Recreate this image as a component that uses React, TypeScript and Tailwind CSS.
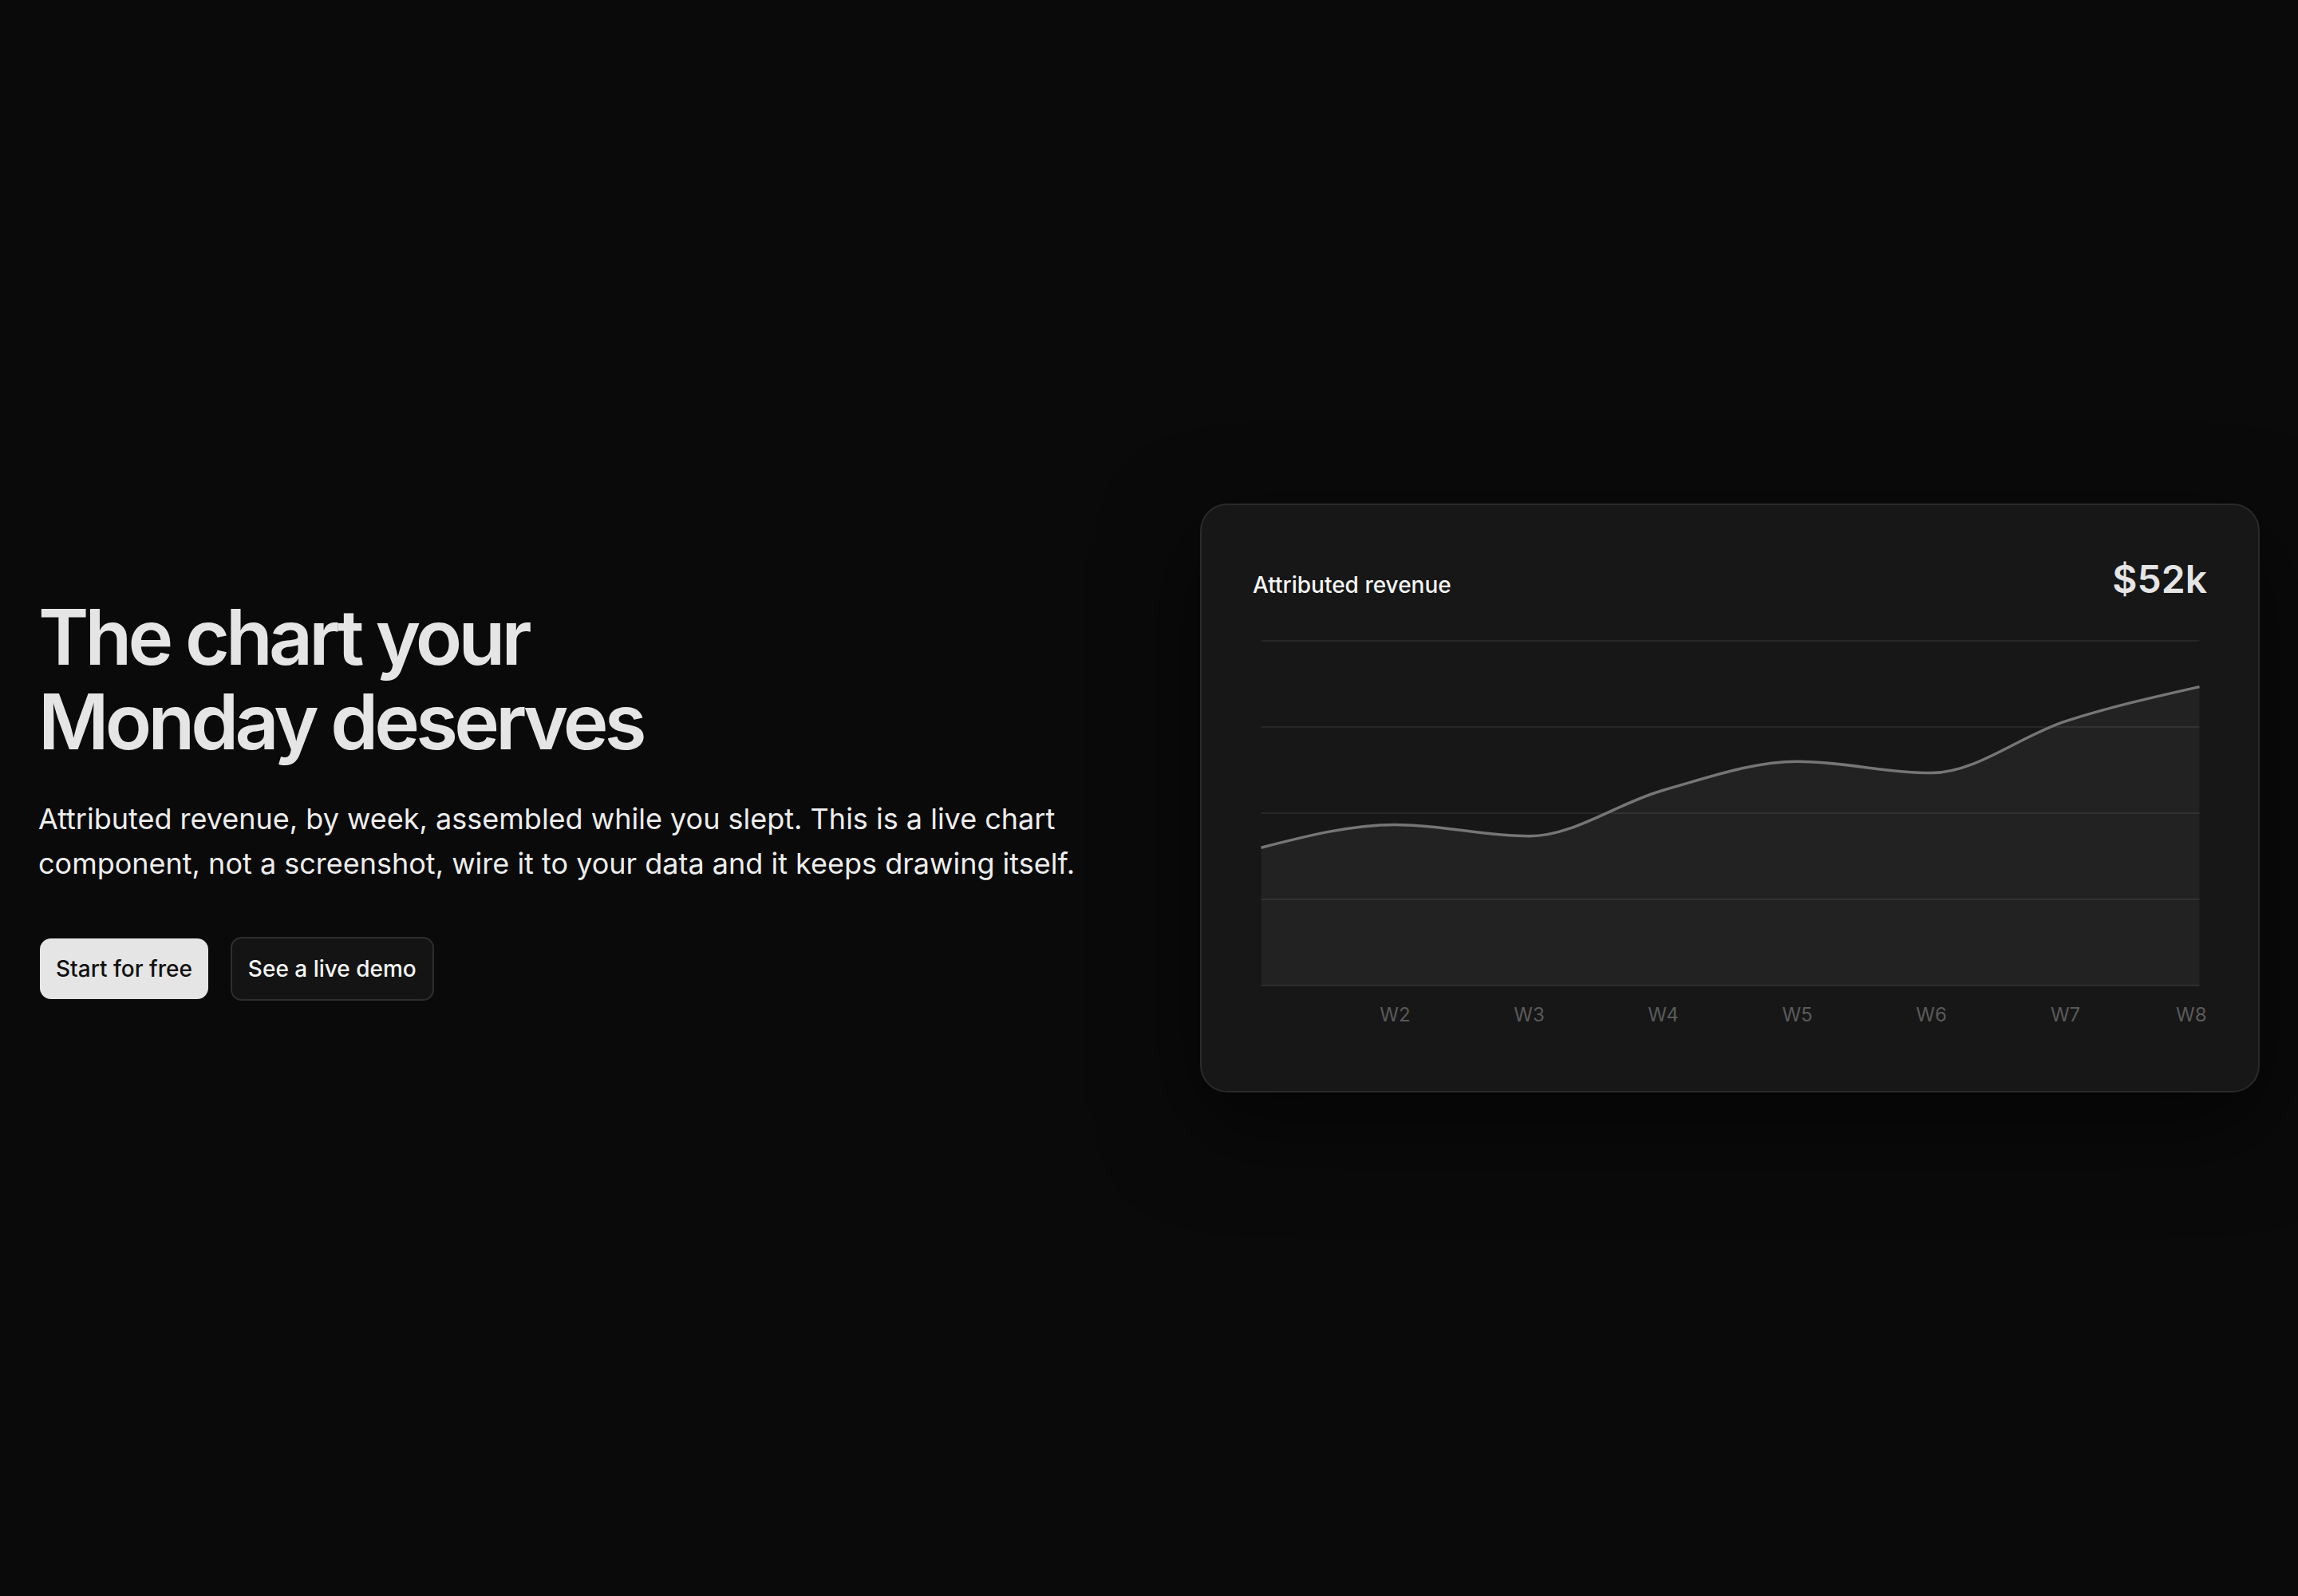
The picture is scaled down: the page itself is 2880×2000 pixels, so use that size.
import React from 'react';

const weeks = [
  { label: 'W1', value: 24 },
  { label: 'W2', value: 28 },
  { label: 'W3', value: 26 },
  { label: 'W4', value: 34 },
  { label: 'W5', value: 39 },
  { label: 'W6', value: 37 },
  { label: 'W7', value: 46 },
  { label: 'W8', value: 52 }
];

const W = 1195;
const H = 512;
const plot = { left: 10, right: 1186, top: 12, bottom: 444 };
const maxValue = 60;

type Pt = [number, number];

// monotone-x curve, same maths as d3's curveMonotoneX
const monotonePath = (pts: Pt[]) => {
  const n = pts.length;
  const sign = (v: number) => (v < 0 ? -1 : 1);
  const tangents: number[] = new Array(n).fill(0);
  for (let i = 1; i < n - 1; i++) {
    const [x0, y0] = pts[i - 1];
    const [x1, y1] = pts[i];
    const [x2, y2] = pts[i + 1];
    const h0 = x1 - x0;
    const h1 = x2 - x1;
    const s0 = (y1 - y0) / h0;
    const s1 = (y2 - y1) / h1;
    const p = (s0 * h1 + s1 * h0) / (h0 + h1);
    tangents[i] = (sign(s0) + sign(s1)) * Math.min(Math.abs(s0), Math.abs(s1), 0.5 * Math.abs(p)) || 0;
  }
  const ends = (a: Pt, b: Pt, t: number) => {
    const h = b[0] - a[0];
    return h ? (3 * (b[1] - a[1]) / h - t) / 2 : t;
  };
  tangents[0] = ends(pts[0], pts[1], tangents[1]);
  tangents[n - 1] = ends(pts[n - 2], pts[n - 1], tangents[n - 2]);

  let d = `M${pts[0][0]},${pts[0][1]}`;
  for (let i = 0; i < n - 1; i++) {
    const [x0, y0] = pts[i];
    const [x1, y1] = pts[i + 1];
    const dx = (x1 - x0) / 3;
    d += ` C${x0 + dx},${y0 + dx * tangents[i]} ${x1 - dx},${y1 - dx * tangents[i + 1]} ${x1},${y1}`;
  }
  return d;
};

const RevenueChart = () => {
  const step = (plot.right - plot.left) / (weeks.length - 1);
  const pts: Pt[] = weeks.map((week, i) => [
    plot.left + i * step,
    plot.bottom - (week.value / maxValue) * (plot.bottom - plot.top)
  ]);
  const line = monotonePath(pts);
  const area = `${line} L${plot.right},${plot.bottom} L${plot.left},${plot.bottom} Z`;
  const gridRows = [0, 1, 2, 3, 4].map((i) => plot.top + i * ((plot.bottom - plot.top) / 4));

  return (
    <svg viewBox={`0 0 ${W} ${H}`} className="mt-9 block h-[512px] w-full">
      {gridRows.map((y) => (
        <line key={y} x1={plot.left} x2={plot.right} y1={y} y2={y} stroke="#272727" strokeWidth={2} />
      ))}
      <path d={area} fill="#ffffff" fillOpacity={0.05} />
      <path d={line} fill="none" stroke="#767676" strokeWidth={3.5} />
      {weeks.slice(1).map((week, i) => {
        const last = i === weeks.length - 2;
        return (
          <text
            key={week.label}
            x={last ? W : pts[i + 1][0]}
            y={489}
            textAnchor={last ? 'end' : 'middle'}
            fill="#5a5a5a"
            fontSize={24}
            fontFamily="Inter, sans-serif"
          >
            {week.label}
          </text>
        );
      })}
    </svg>
  );
};

const App = () => {
  return (
    <div className="flex min-h-screen items-center bg-[#0a0a0a] px-12 font-['Inter',sans-serif]">
      <div className="grid w-full grid-cols-2 items-center gap-32">
        <div>
          <h1 className="text-[96px] font-semibold leading-[1.1] tracking-tighter text-[#e5e5e5]">
            The chart your
            <br />
            Monday deserves
          </h1>
          <p className="mt-10 text-[36px] leading-[56px] text-[#ededed]">
            Attributed revenue, by week, assembled while you slept. This is a live chart component, not a screenshot,
            wire it to your data and it keeps drawing itself.
          </p>
          <div className="mt-16 flex items-center gap-7">
            <button className="ml-[2px] rounded-[14px] bg-[#e5e5e5] px-5 py-[18px] text-[28px] font-medium leading-[40px] text-[#111111]">
              Start for free
            </button>
            <button className="rounded-[14px] border-2 border-[#2e2e2e] bg-[#141414] px-5 py-[18px] text-[28px] font-medium leading-[40px] text-[#f5f5f5]">
              See a live demo
            </button>
          </div>
        </div>

        <div className="rounded-[34px] border-2 border-[#2a2a2a] bg-[#171717] p-16 shadow-[0_40px_120px_rgba(0,0,0,0.6)]">
          <div className="flex items-baseline justify-between">
            <span className="text-[28px] font-medium text-[#f5f5f5]">Attributed revenue</span>
            <span className="text-[48px] font-semibold leading-[58px] text-[#e5e5e5]">$52k</span>
          </div>
          <RevenueChart />
        </div>
      </div>
    </div>
  );
};

export default App;
